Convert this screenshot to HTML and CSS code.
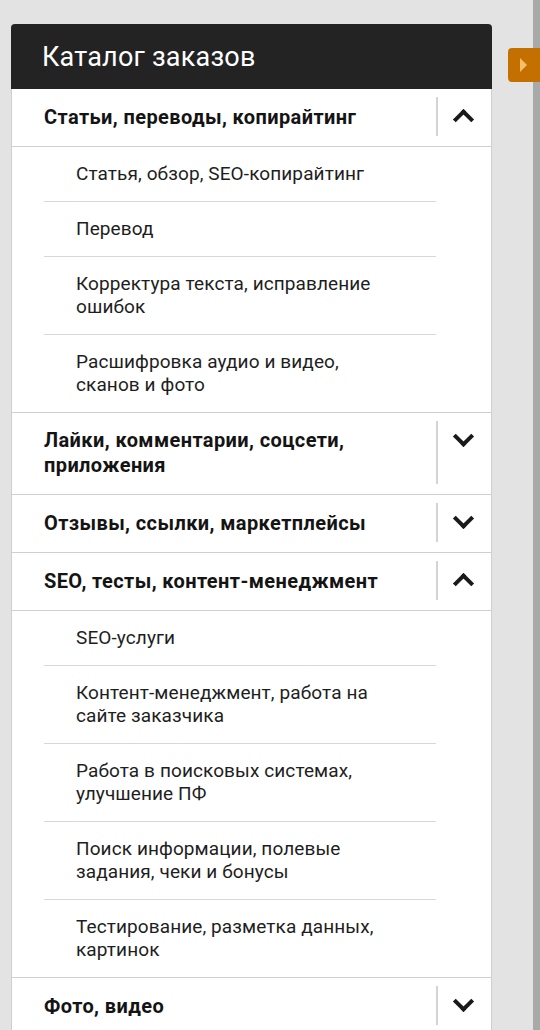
FILE: index.html
```html
<!DOCTYPE html>
<html lang="ru">
<head>
    <meta charset="UTF-8">
    <meta name="viewport" content="width=device-width, initial-scale=1.0">
    <title>Каталог заказов</title>
    <link rel="stylesheet" href="styles.css">
</head>
<body>
    <div class="page">
        <aside class="catalog">
            <div class="catalog-header">
                <h2>Каталог заказов</h2>
            </div>

            <div class="category open">
                <div class="category-row">
                    <span class="category-name">Статьи, переводы, копирайтинг</span>
                    <span class="toggle up"></span>
                </div>
                <ul class="sub-list">
                    <li>Статья, обзор, SEO-копирайтинг</li>
                    <li>Перевод</li>
                    <li>Корректура текста, исправление ошибок</li>
                    <li>Расшифровка аудио и видео, сканов и фото</li>
                </ul>
            </div>

            <div class="category">
                <div class="category-row">
                    <span class="category-name">Лайки, комментарии, соцсети, приложения</span>
                    <span class="toggle down"></span>
                </div>
            </div>

            <div class="category">
                <div class="category-row">
                    <span class="category-name">Отзывы, ссылки, маркетплейсы</span>
                    <span class="toggle down"></span>
                </div>
            </div>

            <div class="category open">
                <div class="category-row">
                    <span class="category-name">SEO, тесты, контент-менеджмент</span>
                    <span class="toggle up"></span>
                </div>
                <ul class="sub-list">
                    <li>SEO-услуги</li>
                    <li>Контент-менеджмент, работа на сайте заказчика</li>
                    <li>Работа в поисковых системах, улучшение ПФ</li>
                    <li>Поиск информации, полевые задания, чеки и бонусы</li>
                    <li>Тестирование, разметка данных, картинок</li>
                </ul>
            </div>

            <div class="category">
                <div class="category-row">
                    <span class="category-name">Фото, видео</span>
                    <span class="toggle down"></span>
                </div>
            </div>
        </aside>

        <div class="side-tab"><span class="tab-arrow"></span></div>
        <div class="scroll-strip"></div>
    </div>
</body>
</html>
```

FILE: styles.css
```css
/* Base styles */
* {
    margin: 0;
    padding: 0;
    box-sizing: border-box;
}

:root {
    --bg: #e3e3e3;
    --dark: #232323;
    --line: #cfcfcf;
    --text: #141414;
    --orange: #c47000;
}

body {
    font-family: Roboto, "Liberation Sans", sans-serif;
    background-color: var(--bg);
    color: var(--text);
    height: 1030px;
    overflow: hidden;
}

.page {
    position: relative;
    padding: 24px 0 0 11px;
    height: 100%;
}

/* Catalog panel */
.catalog {
    width: 481px;
    background: #fff;
    border-left: 1px solid var(--line);
    border-right: 1px solid var(--line);
    border-radius: 4px 4px 0 0;
}

.catalog-header {
    background: var(--dark);
    height: 65px;
    padding-left: 31px;
    display: flex;
    align-items: center;
    border-radius: 4px 4px 0 0;
    margin: 0 -1px;
}

.catalog-header h2 {
    color: #fff;
    font-size: 27px;
    font-weight: 400;
    letter-spacing: 0.2px;
}

/* Category rows */
.category {
    border-bottom: 1px solid var(--line);
}

.category-row {
    display: flex;
    align-items: stretch;
    min-height: 57px;
}

.category-name {
    flex: 1;
    padding: 15px 20px 16px 32px;
    font-size: 20px;
    font-weight: 700;
    line-height: 25px;
    letter-spacing: 0.4px;
    align-self: center;
}

.toggle {
    width: 55px;
    margin: 8px 0 10px;
    border-left: 2px solid #d4d4d4;
    position: relative;
}

.toggle::after {
    content: '';
    position: absolute;
    left: 18px;
    width: 11px;
    height: 11px;
    border-top: 4px solid #1a1a1a;
    border-left: 4px solid #1a1a1a;
}

.toggle.up::after {
    top: 15px;
    transform: rotate(45deg);
}

.toggle.down::after {
    top: 8px;
    transform: rotate(-135deg);
}

/* Sub items */
.sub-list {
    list-style: none;
    margin: 0 55px 0 32px;
}

.sub-list li {
    padding: 15px 30px 16px 32px;
    font-size: 19px;
    line-height: 23px;
    letter-spacing: 0.1px;
    color: #1e1e1e;
    border-bottom: 1px solid #d8d8d8;
}

.sub-list li:last-child {
    border-bottom: none;
}

.open .category-row {
    min-height: 58px;
    border-bottom: 1px solid var(--line);
}

/* Right side tab */
.side-tab {
    position: absolute;
    top: 48px;
    left: 508px;
    width: 40px;
    height: 34px;
    background: var(--orange);
    border-radius: 4px 0 0 4px;
    z-index: 2;
}

.tab-arrow {
    position: absolute;
    left: 12px;
    top: 10px;
    border-top: 7px solid transparent;
    border-bottom: 7px solid transparent;
    border-left: 7px solid #f6bd6a;
}

.scroll-strip {
    position: absolute;
    top: 0;
    right: 0;
    width: 7px;
    height: 100%;
    background: #a9a9a9;
}
```
